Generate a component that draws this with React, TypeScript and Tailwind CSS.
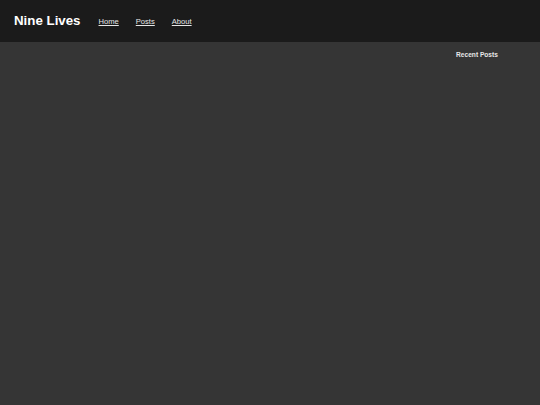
export default function App() {
  return (
    <div className="flex min-h-screen flex-col bg-[#353535] font-['Liberation_Sans',Arial,sans-serif] text-white">
      <header className="flex h-[42px] items-center bg-[#1b1b1b] px-[14px]">
        <h1 className="text-[13.3px] font-bold leading-none">Nine Lives</h1>
        <nav className="ml-[18px] flex gap-[17px] pt-px text-[7.6px] leading-none text-[#e6e6e6]">
          <a href="#" className="underline">Home</a>
          <a href="#" className="underline">Posts</a>
          <a href="#" className="underline">About</a>
        </nav>
      </header>
      <div className="flex flex-1">
        <main className="flex-1" />
        <aside className="w-[126px] pt-[10px] text-center">
          <h2 className="text-[6.6px] font-bold leading-none text-[#e8e8e8]">Recent Posts</h2>
        </aside>
      </div>
    </div>
  );
}
